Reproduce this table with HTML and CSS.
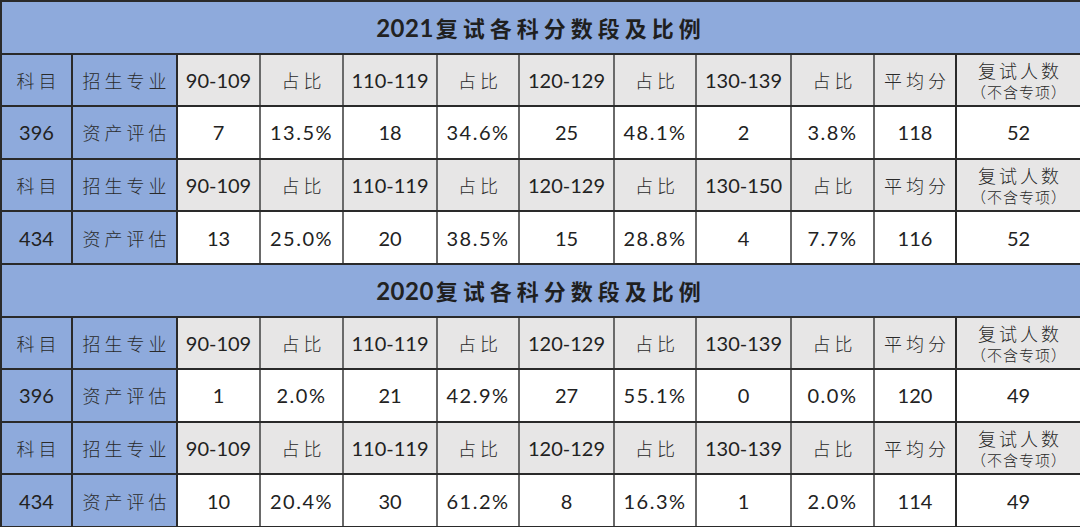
FILE: index.html
```html
<!DOCTYPE html>
<html lang="zh">
<head>
<meta charset="utf-8">
<link rel="stylesheet" href="styles.css">
</head>
<body>
<table class="grid">
  <colgroup>
    <col class="c71"><col class="c105"><col class="c83"><col class="c83"><col class="c94"><col class="c82"><col class="c95"><col class="c82"><col class="c95"><col class="c83"><col class="c82"><col class="c123">
  </colgroup>
  <tbody>
    <tr class="title"><td colspan="12"><span class="num">2021</span>复试各科分数段及比例</td></tr>
    <tr class="head">
      <td class="blue cjk">科目</td><td class="blue cjk major">招生专业</td>
      <td class="num">90-109</td><td class="cjk">占比</td><td class="num">110-119</td><td class="cjk">占比</td>
      <td class="num">120-129</td><td class="cjk">占比</td><td class="num">130-139</td><td class="cjk">占比</td>
      <td class="cjk dark">平均分</td><td class="cjk two dark"><div class="big">复试人数</div><div class="small">（不含专项）</div></td>
    </tr>
    <tr class="data">
      <td class="blue num">396</td><td class="blue cjk major">资产评估</td>
      <td class="num">7</td><td class="num pct">13.5%</td><td class="num">18</td><td class="num pct">34.6%</td>
      <td class="num">25</td><td class="num pct">48.1%</td><td class="num">2</td><td class="num pct">3.8%</td>
      <td class="num dark">118</td><td class="num dark">52</td>
    </tr>
    <tr class="head">
      <td class="blue cjk">科目</td><td class="blue cjk major">招生专业</td>
      <td class="num">90-109</td><td class="cjk">占比</td><td class="num">110-119</td><td class="cjk">占比</td>
      <td class="num">120-129</td><td class="cjk">占比</td><td class="num">130-150</td><td class="cjk">占比</td>
      <td class="cjk dark">平均分</td><td class="cjk two dark"><div class="big">复试人数</div><div class="small">（不含专项）</div></td>
    </tr>
    <tr class="data">
      <td class="blue num">434</td><td class="blue cjk major">资产评估</td>
      <td class="num">13</td><td class="num pct">25.0%</td><td class="num">20</td><td class="num pct">38.5%</td>
      <td class="num">15</td><td class="num pct">28.8%</td><td class="num">4</td><td class="num pct">7.7%</td>
      <td class="num dark">116</td><td class="num dark">52</td>
    </tr>
    <tr class="title"><td colspan="12"><span class="num">2020</span>复试各科分数段及比例</td></tr>
    <tr class="head">
      <td class="blue cjk">科目</td><td class="blue cjk major">招生专业</td>
      <td class="num">90-109</td><td class="cjk">占比</td><td class="num">110-119</td><td class="cjk">占比</td>
      <td class="num">120-129</td><td class="cjk">占比</td><td class="num">130-139</td><td class="cjk">占比</td>
      <td class="cjk dark">平均分</td><td class="cjk two dark"><div class="big">复试人数</div><div class="small">（不含专项）</div></td>
    </tr>
    <tr class="data">
      <td class="blue num">396</td><td class="blue cjk major">资产评估</td>
      <td class="num">1</td><td class="num pct">2.0%</td><td class="num">21</td><td class="num pct">42.9%</td>
      <td class="num">27</td><td class="num pct">55.1%</td><td class="num">0</td><td class="num pct">0.0%</td>
      <td class="num dark">120</td><td class="num dark">49</td>
    </tr>
    <tr class="head">
      <td class="blue cjk">科目</td><td class="blue cjk major">招生专业</td>
      <td class="num">90-109</td><td class="cjk">占比</td><td class="num">110-119</td><td class="cjk">占比</td>
      <td class="num">120-129</td><td class="cjk">占比</td><td class="num">130-139</td><td class="cjk">占比</td>
      <td class="cjk dark">平均分</td><td class="cjk two dark"><div class="big">复试人数</div><div class="small">（不含专项）</div></td>
    </tr>
    <tr class="data">
      <td class="blue num">434</td><td class="blue cjk major">资产评估</td>
      <td class="num">10</td><td class="num pct">20.4%</td><td class="num">30</td><td class="num pct">61.2%</td>
      <td class="num">8</td><td class="num pct">16.3%</td><td class="num">1</td><td class="num pct">2.0%</td>
      <td class="num dark">114</td><td class="num dark">49</td>
    </tr>
  </tbody>
</table>
</body>
</html>
```

FILE: styles.css
```css
html, body {
  margin: 0;
  padding: 0;
  background: #ffffff;
}

.grid {
  border-collapse: collapse;
  table-layout: fixed;
  width: 1080px;
  color: #1f1f1f;
}

.c71 { width: 71px; }
.c105 { width: 105px; }
.c83 { width: 83px; }
.c82 { width: 82px; }
.c94 { width: 94px; }
.c95 { width: 95px; }
.c123 { width: 125px; }

.grid td {
  padding: 0;
  text-align: center;
  vertical-align: middle;
  border-top: 2px solid #2a2a2a;
  border-bottom: 2px solid #2a2a2a;
  border-left: 2px solid #6a6a6a;
  border-right: 2px solid #6a6a6a;
  overflow: hidden;
  white-space: nowrap;
}

.grid tr {
  height: 52.6px;
}

.title td {
  background: #8eaadc;
  font-family: "Noto Sans CJK SC", sans-serif;
  font-weight: 700;
  font-size: 22px;
  letter-spacing: 5px;
  border-left: 2px solid #2a2a2a;
  border-right: 2px solid #2a2a2a;
}

.title .num {
  font-family: Lato, "Liberation Sans", sans-serif;
  font-weight: 700;
  font-size: 24px;
  letter-spacing: 0.5px;
  margin-right: 2px;
}

.head td {
  background: #e7e6e6;
}

.data td {
  background: #ffffff;
}

.grid td.blue {
  background: #8eaadc;
  border-left-color: #2a2a2a;
  border-right-color: #2a2a2a;
}

.grid td.dark {
  border-right-color: #2a2a2a;
}

.grid td:last-child {
  border-left-color: #2a2a2a;
  border-right-color: #2a2a2a;
}

.cjk {
  font-family: "Noto Sans CJK SC", sans-serif;
  font-weight: 300;
  font-size: 18px;
  letter-spacing: 4px;
  text-indent: 4px;
  color: #2a2a2a;
}

.major {
  letter-spacing: 4px;
}

.num {
  font-family: Lato, "Liberation Sans", sans-serif;
  font-size: 20px;
  color: #222222;
}

.pct {
  letter-spacing: 1.5px;
}

.two .big {
  font-size: 18px;
  line-height: 24px;
  letter-spacing: 3px;
  text-indent: 3px;
}

.two .small {
  font-size: 15px;
  line-height: 20px;
  letter-spacing: 1px;
  text-indent: 1px;
}
```
